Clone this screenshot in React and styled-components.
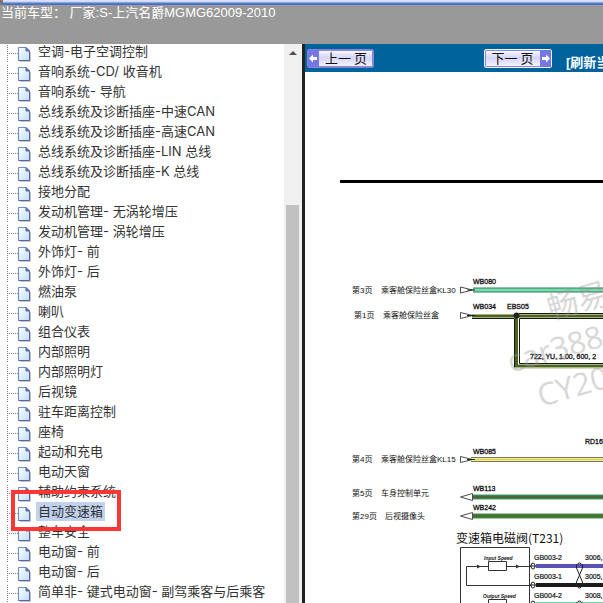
import styled, { createGlobalStyle } from "styled-components";

const GlobalStyle = createGlobalStyle`
* {
    box-sizing: border-box;
}
body {
    margin: 0;
    background: #fff;
    font-family: Inter, "Noto Sans CJK SC", sans-serif;
    font-size: 13px;
    color: #333;
}
`

const Page = styled.div`
height: 100vh;
display: grid;
grid-template-rows: 5px 39px 1fr;
overflow: hidden;
`

const TopStrip = styled.div`
background: linear-gradient(#e8ecfa 0, #c3cff2 2px, #5b80d0 3px, #4669bd 5px);
border-left: 3px solid #777;
`

const Head = styled.header`
background: #999;
color: #fff;
padding: 0 1px;
font-family: "Liberation Sans", "Noto Sans CJK SC", sans-serif;
font-size: 13px;
line-height: 15px;
white-space: pre;
overflow: hidden;
`

const Main = styled.main`
display: grid;
grid-template-columns: 302px 1fr;
min-height: 0;
`

const Side = styled.aside`
display: grid;
grid-template-columns: 1fr 18px;
min-height: 0;
`

const Tree = styled.ul`
list-style: none;
margin: 0;
padding: 0 0 0 7px;
overflow: hidden;
min-height: 0;
`

const Node = styled.li`
height: 20px;
display: flex;
align-items: flex-start;
position: relative;
`

const Trunk = styled.span`
width: 1px;
height: 17px;
margin-top: 1px;
background: repeating-linear-gradient(#808080 0 1px, transparent 1px 2px);
`

const Twig = styled.span`
width: 10px;
height: 1px;
margin-top: 9px;
background: repeating-linear-gradient(90deg, transparent 0 1px, #808080 1px 2px);
`

const FileSvg = styled.svg`
width: 13px;
height: 15px;
margin-top: 3px;
margin-right: 5px;
flex: none;
`

const NodeLink = styled.a`
color: #333;
text-decoration: none;
white-space: pre;
line-height: ${props => props.$active ? "19px" : "15px"};
padding: 0 2px;
margin-top: ${props => props.$active ? "-2px" : "0"};
background: ${props => props.$active ? "#c1d2ee" : "none"};
`

const Marker = styled.span`
position: absolute;
left: 4px;
top: -14px;
width: 110px;
height: 41px;
border: 4px solid #fc3535;
z-index: 1;
`

const ScrollBar = styled.div`
display: flex;
flex-direction: column;
background: #f0f0f0;
padding: 0 3px 0 2px;
min-height: 0;
`

const ScrollUp = styled.button`
border: 0;
padding: 0;
background: none;
height: 17px;
display: flex;
align-items: center;
justify-content: center;
`

const Thumb = styled.div`
flex: 1;
margin-top: 144px;
background: #c1c1c1;
`

const Viewer = styled.section`
border-left: 3px solid #222;
display: flex;
flex-direction: column;
min-width: 0;
min-height: 0;
overflow: hidden;
`

const Toolbar = styled.nav`
height: 28px;
flex: none;
background: #00639c;
display: flex;
align-items: center;
padding: 0 2px;
`

const PageButton = styled.button`
display: flex;
flex: none;
flex-direction: ${props => props.$next ? "row-reverse" : "row"};
width: ${props => props.$next ? "68px" : "67px"};
height: 19px;
padding: 0;
margin-right: ${props => props.$next ? "14px" : "110px"};
border: 1px solid ${props => props.$next ? "#f0f0ff" : "#8484d8"};
border-radius: 2px;
box-shadow: inset 0 0 0 1px #8a8ad0;
background: linear-gradient(#fff, #d4d4f8 45%, #f6f6ff);
color: #111;
font-family: "Noto Sans CJK SC", sans-serif;
font-size: 13px;
line-height: 16px;
span {
    flex: 1;
    white-space: pre;
}
svg {
    width: 11px;
    height: 17px;
    background: #7477e4;
}
`

const Refresh = styled.a`
align-self: flex-end;
color: #fff;
font-family: "Liberation Sans", "Noto Sans CJK SC", sans-serif;
font-weight: bold;
font-size: 13px;
line-height: 18px;
text-decoration: none;
white-space: nowrap;
`

const Sheet = styled.div`
flex: 1;
min-height: 0;
overflow: hidden;
background: #fff;
`

const Diagram = styled.svg`
display: block;
font-family: "Liberation Sans", "Noto Sans CJK SC", sans-serif;
font-size: 8px;
fill: #111;
.page {
    white-space: pre;
}
.code {
    font-size: 7px;
    stroke: #111;
    stroke-width: 0.3;
}
.tiny {
    font-size: 5px;
    font-style: italic;
    font-weight: bold;
}
.title {
    font-family: "Noto Sans CJK SC", sans-serif;
    font-size: 12px;
}
.pin {
    font-size: 7px;
    stroke: #111;
    stroke-width: 0.2;
}
.mark {
    font-family: "Open Sans", "Noto Sans CJK SC", sans-serif;
    font-size: 31px;
    fill: #999;
    opacity: 0.38;
}
`

const items = [
  "空调-电子空调控制",
  "音响系统-CD/ 收音机",
  "音响系统- 导航",
  "总线系统及诊断插座-中速CAN",
  "总线系统及诊断插座-高速CAN",
  "总线系统及诊断插座-LIN 总线",
  "总线系统及诊断插座-K 总线",
  "接地分配",
  "发动机管理- 无涡轮增压",
  "发动机管理- 涡轮增压",
  "外饰灯- 前",
  "外饰灯- 后",
  "燃油泵",
  "喇叭",
  "组合仪表",
  "内部照明",
  "内部照明灯",
  "后视镜",
  "驻车距离控制",
  "座椅",
  "起动和充电",
  "电动天窗",
  "辅助约束系统",
  "自动变速箱",
  "整车安全",
  "电动窗- 前",
  "电动窗- 后",
  "简单非- 键式电动窗- 副驾乘客与后乘客",
];

const current = "自动变速箱";

function FileIcon() {
  return (
    <FileSvg viewBox="0 0 13 15" aria-hidden="true">
      <path d="M2 14.5h10.5V5" fill="none" stroke="#c4c4c8" />
      <path d="M0.5 0.5h7.5l3.5 3.5v9.5h-11z" fill="url(#paper)" stroke="#6c8cd0" />
      <path d="M11.5 4v9.5h-11" fill="none" stroke="#5866a4" />
      <path d="M8 0.5v3.5h3.5z" fill="#6a80c0" stroke="#5866a4" />
    </FileSvg>
  );
}

// striped conductor: outer colour, body and an optional core line
function Wire({ d, edge, body, core }) {
  return (
    <g fill="none">
      <path d={d} stroke={edge} strokeWidth="5" />
      <path d={d} stroke={body} strokeWidth="3" />
      {core && <path d={d} stroke={core} strokeWidth="1" />}
    </g>
  );
}

function Wiring() {
  return (
    <Diagram width="600" height="560" viewBox="305 72 600 560" role="img" aria-label="变速箱电磁阀">
      <path d="M340 181.5H905" stroke="#000" strokeWidth="3" />

      <Wire d="M473 290H905" edge="#2f7a58" body="#78dcae" />

      <g fill="none">
        <path d="M472 316H905M516.5 316V366H905" stroke="#4c6420" strokeWidth="3" />
        <path d="M472 318.5H514.500V367.500M519.500 363.500V318.500H905M519.500 363.500H905M519 313.500H905" stroke="#151a08" />
        <path d="M472 314.500H514" stroke="#a8b070" />
        <path d="M515 368H905" stroke="#b0b88c" />
      </g>
      <circle cx="516.5" cy="315.5" r="3" fill="#222" />

      <Wire d="M471 459.5H905" edge="#77775a" body="#f4f090" core="#d8cc60" />
      <Wire d="M473 497H905" edge="#38a570" body="#4d6638" />
      <Wire d="M473 516H905" edge="#52864a" body="#3a7630" />

      <g fill="#fff" stroke="#222" strokeWidth="0.8">
        <path d="M460.5 287v6l12-3zM460.5 312.500v6l12-3zM460.5 456.500v6l12-3z" />
        <path d="M472.500 493.500v7l-12-3.500zM472.500 512.500v7l-12-3.500z" />
      </g>
      <path d="M467 290h8M467 315.500h8M467 459.500h8" stroke="#222" />

      <g className="page">
        <text x="352" y="293">第3页</text>
        <text x="381" y="293">乘客舱保险丝盒KL30</text>
        <text x="354" y="318">第1页</text>
        <text x="383" y="318">乘客舱保险丝盒</text>
        <text x="352" y="462">第4页</text>
        <text x="381" y="462">乘客舱保险丝盒KL15</text>
        <text x="352" y="496">第5页</text>
        <text x="381" y="496">车身控制单元</text>
        <text x="352" y="519">第29页</text>
        <text x="385" y="519">后视摄像头</text>
      </g>

      <g className="code">
        <text x="473" y="284">WB080</text>
        <text x="473" y="309">WB034</text>
        <text x="507" y="309">EBS05</text>
        <text x="530" y="359">722, YU, 1.00, 600, 2</text>
        <text x="473" y="454">WB085</text>
        <text x="585" y="444">RD160</text>
        <text x="473" y="491">WB113</text>
        <text x="473" y="510">WB242</text>
      </g>

      <text className="title" x="456" y="543">变速箱电磁阀(T231)</text>

      <g fill="none" stroke="#333">
        <path d="M460.500 640V547.500H529.500V640" />
        <path d="M488 566.500H466.500V585.500H531M507 566.500H531M488 604.500H466.500V622.500" />
        <path d="M488.500 561.500h18v9h-18zM488.500 599.500h18v9h-18z" />
      </g>
      <path d="M477 564.500l4 2l-4 2zM516 564.500l4 2l-4 2z" fill="#333" />
      <path d="M536 566H905" stroke="#5654b0" strokeWidth="4" />
      <path d="M536 585H905" stroke="#1c1c1c" strokeWidth="4" />
      <path d="M536 604H905" stroke="#70d4a8" strokeWidth="4" />
      <g fill="none" stroke="#222">
        <ellipse cx="533" cy="566" rx="2" ry="3" />
        <ellipse cx="533" cy="585" rx="2" ry="3" />
        <ellipse cx="533" cy="604" rx="2" ry="3" />
        <path d="M530 566h6M530 585h6" />
        <path d="M576.500 568V565q3-4 6 0V568L576.500 582V586q3 4 6 0V582L576.500 568M576.500 606V603q3-4 6 0V606" />
      </g>
      <text className="tiny" x="484" y="560">Input Speed</text>
      <text className="tiny" x="483" y="598">Output Speed</text>
      <g className="pin">
        <text x="534" y="560">GB003-2</text>
        <text x="534" y="579">GB003-1</text>
        <text x="534" y="598">GB004-2</text>
        <text x="585" y="560">3006,</text>
        <text x="585" y="579">3005,</text>
        <text x="585" y="598">3008,</text>
      </g>

      <g className="mark">
        <text transform="translate(551 320) rotate(-16)">畅易</text>
        <text transform="translate(511 373) rotate(-16)">car388</text>
        <text transform="translate(541 407) rotate(-16)">CY20</text>
      </g>
    </Diagram>
  );
}

function App() {
  return (
    <Page>
      <GlobalStyle />
      <svg width="0" height="0" style={{ position: "absolute" }} aria-hidden="true">
        <linearGradient id="paper" x1="0" y1="0" x2="1" y2="1">
          <stop offset="0" stopColor="#fff" />
          <stop offset="1" stopColor="#bcdcfc" />
        </linearGradient>
      </svg>
      <TopStrip />
      <Head>当前车型： 厂家:S-上汽名爵MGMG62009-2010</Head>
      <Main>
        <Side>
          <Tree>
            {items.map((name) => (
              <Node key={name}>
                <Trunk />
                <Twig />
                <FileIcon />
                <NodeLink href="#" $active={name === current}>{name}</NodeLink>
                {name === current && <Marker />}
              </Node>
            ))}
          </Tree>
          <ScrollBar>
            <ScrollUp aria-label="向上滚动">
              <svg width="8" height="4" viewBox="0 0 8 4"><path d="M0 4L4 0L8 4z" fill="#505050" /></svg>
            </ScrollUp>
            <Thumb />
          </ScrollBar>
        </Side>
        <Viewer>
          <Toolbar>
            <PageButton>
              <svg viewBox="0 0 11 17"><path d="M1 8.500l4-4v2.500h4v3h-4v2.500z" fill="#fff" /></svg>
              <span>上一 页</span>
            </PageButton>
            <PageButton $next>
              <svg viewBox="0 0 11 17"><path d="M10 8.500l-4-4v2.500h-4v3h4v2.500z" fill="#fff" /></svg>
              <span>下一 页</span>
            </PageButton>
            <Refresh href="#">[刷新当</Refresh>
          </Toolbar>
          <Sheet>
            <Wiring />
          </Sheet>
        </Viewer>
      </Main>
    </Page>
  );
}

export default App;
